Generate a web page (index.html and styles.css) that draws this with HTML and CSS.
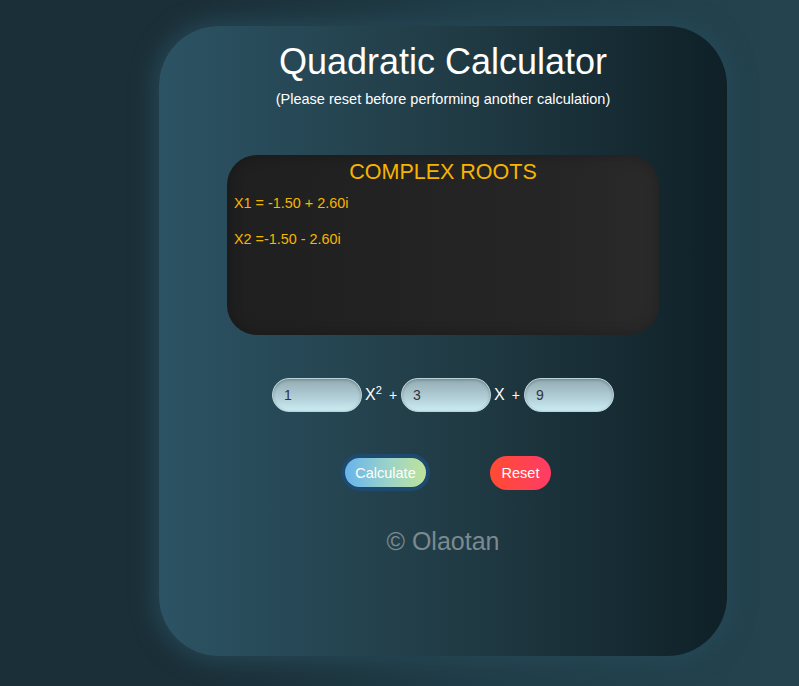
FILE: index.html
```html
<!DOCTYPE html>
<html>
<head>
<meta charset="utf-8">
<link rel="stylesheet" href="styles.css">
</head>
<body>
<div class="card">
  <h1 class="title">Quadratic Calculator</h1>
  <p class="note">(Please reset before performing another calculation)</p>
  <div class="result">
    <div class="result-head">COMPLEX ROOTS</div>
    <p class="root">X1 = -1.50 + 2.60i</p>
    <p class="root">X2 =-1.50 - 2.60i</p>
  </div>
  <div class="equation">
    <input class="coef" type="text" value="1">
    <span class="term">X<sup>2</sup></span>
    <span class="plus">+</span>
    <input class="coef" type="text" value="3">
    <span class="term">X</span>
    <span class="plus">+</span>
    <input class="coef" type="text" value="9">
  </div>
  <div class="actions">
    <button class="btn calc">Calculate</button>
    <button class="btn reset">Reset</button>
  </div>
  <div class="footer">© Olaotan</div>
</div>
</body>
</html>
```
FILE: styles.css
```css
html, body {
  margin: 0;
  padding: 0;
}
body {
  width: 799px;
  height: 686px;
  overflow: hidden;
  background: linear-gradient(to right, #1b2f38 0%, #1b2f38 25%, #203d48 60%, #24434f 100%);
  font-family: "Liberation Sans", Arial, sans-serif;
  padding-top: 26px;
  box-sizing: border-box;
}
.card {
  margin-left: 159px;
  width: 568px;
  height: 630px;
  border-radius: 60px;
  background: linear-gradient(to right, #2c5364 0%, #203a43 55%, #0f2027 100%);
  box-shadow: 0 0 22px 6px rgba(38, 72, 86, 0.9);
  display: flex;
  flex-direction: column;
  align-items: center;
  box-sizing: border-box;
  padding-top: 16px;
}
.title {
  margin: 0;
  color: #ffffff;
  font-weight: normal;
  font-size: 36px;
  line-height: 40px;
}
.note {
  margin: 9px 0 0 0;
  color: #ffffff;
  font-size: 14.5px;
  line-height: 16px;
}
.result {
  margin-top: 48px;
  width: 432px;
  height: 180px;
  border-radius: 30px;
  background: linear-gradient(to right, #1f1f1f, #262626 80%, #2a2a2a);
  box-shadow: inset 0 0 14px rgba(0, 0, 0, 0.25);
  box-sizing: border-box;
  padding: 4px 7px;
  color: #f7b500;
}
.result-head {
  text-align: center;
  font-size: 21.5px;
  line-height: 26px;
}
.root {
  margin: 10px 0 0 0;
  font-size: 14.4px;
  line-height: 17px;
}
.root + .root {
  margin-top: 19px;
}
.equation {
  margin-top: 43px;
  display: flex;
  align-items: center;
}
.coef {
  width: 90px;
  height: 34px;
  box-sizing: border-box;
  border: 1px solid #b9d3da;
  border-radius: 17px;
  background: linear-gradient(to bottom, #93acb4 0%, #b0ccd4 55%, #cbecf3 100%);
  box-shadow: inset 0 1px 3px rgba(0,0,0,0.25);
  padding: 0 0 0 11px;
  font-family: "Liberation Sans", Arial, sans-serif;
  font-size: 14px;
  color: #333333;
  outline: none;
}
.term {
  color: #ffffff;
  font-size: 16px;
  margin-left: 3px;
}
.term sup {
  font-size: 11px;
  vertical-align: 6px;
  line-height: 0;
}
.plus {
  color: #ffffff;
  font-size: 14px;
  margin: 0 4px 0 7px;
}
.actions {
  margin-top: 42px;
  display: flex;
  align-items: center;
  margin-left: 6px;
}
.btn {
  font-family: "Liberation Sans", Arial, sans-serif;
  font-size: 14.5px;
  color: #ffffff;
  border: none;
  height: 34px;
  border-radius: 17px;
  padding: 0;
}
.calc {
  width: 89px;
  height: 37px;
  border: 4px solid #1d4a6e;
  border-radius: 19px;
  background: linear-gradient(to right, #68b4ec, #9cd3c8 55%, #bfe39a);
}
.reset {
  width: 61px;
  margin-left: 60px;
  background: linear-gradient(to right, #ff4b32, #ff3c66);
}
.footer {
  margin-top: 35px;
  color: #7b8a90;
  font-size: 25px;
  line-height: 30px;
}
```
